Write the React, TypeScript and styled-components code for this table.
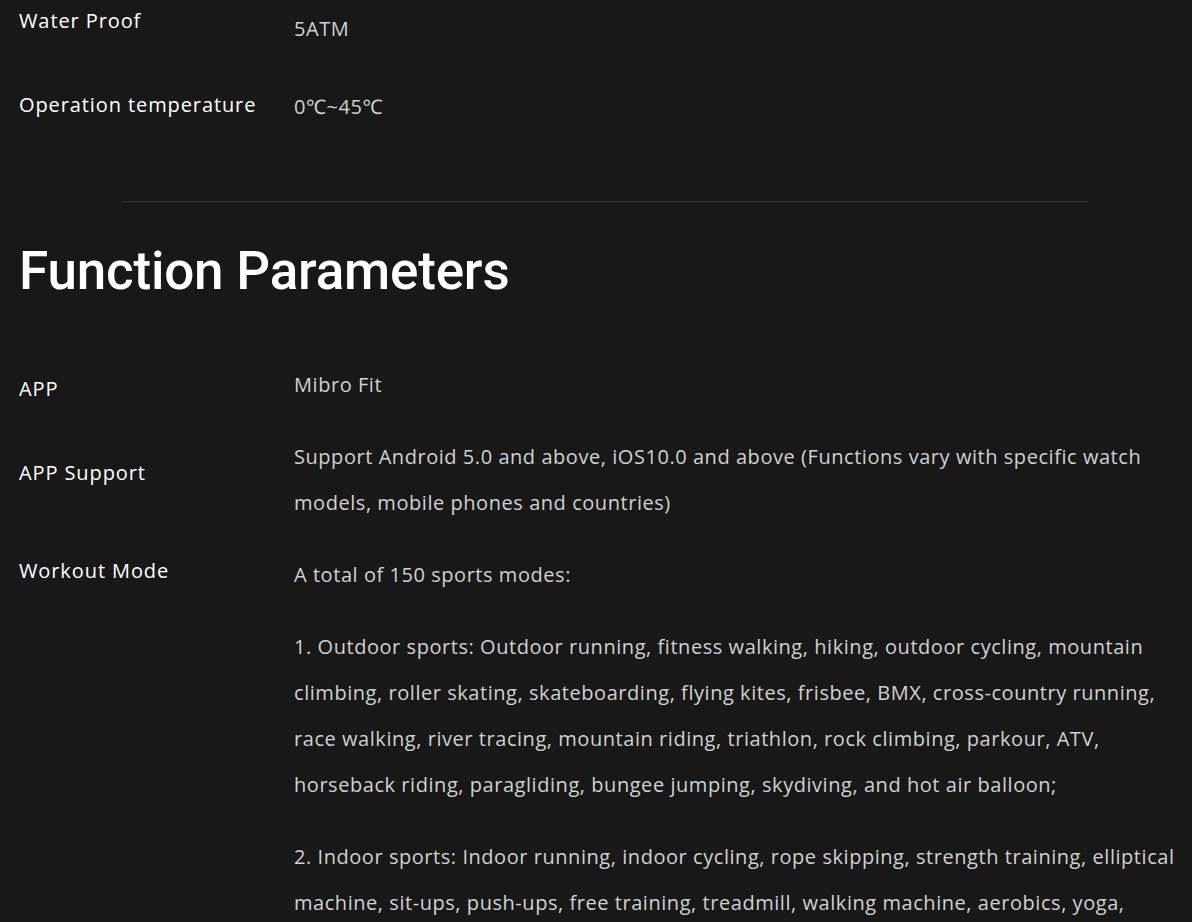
import React from 'react';
import styled, { createGlobalStyle } from 'styled-components';

const GlobalStyle = createGlobalStyle`
  html, body {
    margin: 0;
    padding: 0;
    background-color: #181818;
  }
  body {
    font-family: 'Open Sans', 'Noto Sans', sans-serif;
    -webkit-font-smoothing: antialiased;
  }
`;

const Page = styled.div`
  width: 1192px;
  height: 922px;
  background-color: #181818;
  color: #ffffff;
  overflow: hidden;
`;

const Section = styled.section<{ $top?: number }>`
  padding: ${props => props.$top ?? 0}px 12px 0 19px;
`;

const SpecList = styled.div<{ $gap: number }>`
  display: flex;
  flex-direction: column;
  gap: ${props => props.$gap}px;
`;

const SpecRow = styled.div`
  display: grid;
  grid-template-columns: 275px 1fr;
  align-items: start;
`;

const SpecLabel = styled.div<{ $shift: number }>`
  font-size: 20px;
  line-height: 30px;
  font-weight: 500;
  letter-spacing: 0.9px;
  color: #ffffff;
  padding-top: ${props => props.$shift}px;
  margin-bottom: -${props => props.$shift}px;
  white-space: nowrap;
`;

const SpecValue = styled.div`
  font-size: 20px;
  line-height: 46px;
  font-weight: 400;
  color: #d0d0d0;
  letter-spacing: 0.55px;
  white-space: nowrap;

  p {
    margin: 0 0 26px;
  }
  p:last-child {
    margin-bottom: 0;
  }
`;

const Divider = styled.hr`
  width: 966px;
  margin: 71px 0 0 122px;
  border: none;
  border-top: 1px solid #353535;
  height: 0;
`;

const Title = styled.h2`
  font-family: Roboto, 'Noto Sans', sans-serif;
  font-size: 53px;
  font-weight: 500;
  line-height: 60px;
  margin: 39px 0 61px;
  color: #ffffff;
  letter-spacing: -0.2px;
`;

type Spec = { label: string; shift: number; value: string[][] };

const topSpecs: Spec[] = [
  { label: 'Water Proof', shift: 0, value: [['5ATM']] },
  { label: 'Operation temperature', shift: 6, value: [['0℃~45℃']] },
];

const functionSpecs: Spec[] = [
  { label: 'APP', shift: 12, value: [['Mibro Fit']] },
  {
    label: 'APP Support',
    shift: 24,
    value: [
      [
        'Support Android 5.0 and above, iOS10.0 and above (Functions vary with specific watch',
        'models, mobile phones and countries)',
      ],
    ],
  },
  {
    label: 'Workout Mode',
    shift: 4,
    value: [
      ['A total of 150 sports modes:'],
      [
        '1. Outdoor sports: Outdoor running, fitness walking, hiking, outdoor cycling, mountain',
        'climbing, roller skating, skateboarding, flying kites, frisbee, BMX, cross-country running,',
        'race walking, river tracing, mountain riding, triathlon, rock climbing, parkour, ATV,',
        'horseback riding, paragliding, bungee jumping, skydiving, and hot air balloon;',
      ],
      [
        '2. Indoor sports: Indoor running, indoor cycling, rope skipping, strength training, elliptical',
        'machine, sit-ups, push-ups, free training, treadmill, walking machine, aerobics, yoga,',
      ],
    ],
  },
];

const renderSpec = (spec: Spec) => (
  <SpecRow key={spec.label}>
    <SpecLabel $shift={spec.shift}>{spec.label}</SpecLabel>
    <SpecValue>
      {spec.value.map((lines, i) => (
        <p key={i}>
          {lines.map((line, j) => (
            <React.Fragment key={j}>
              {j > 0 && <br />}
              {line}
            </React.Fragment>
          ))}
        </p>
      ))}
    </SpecValue>
  </SpecRow>
);

export default function App() {
  return (
    <Page>
      <GlobalStyle />
      <Section $top={6}>
        <SpecList $gap={32}>{topSpecs.map(renderSpec)}</SpecList>
      </Section>
      <Divider />
      <Section>
        <Title>Function Parameters</Title>
        <SpecList $gap={26}>{functionSpecs.map(renderSpec)}</SpecList>
      </Section>
    </Page>
  );
}
